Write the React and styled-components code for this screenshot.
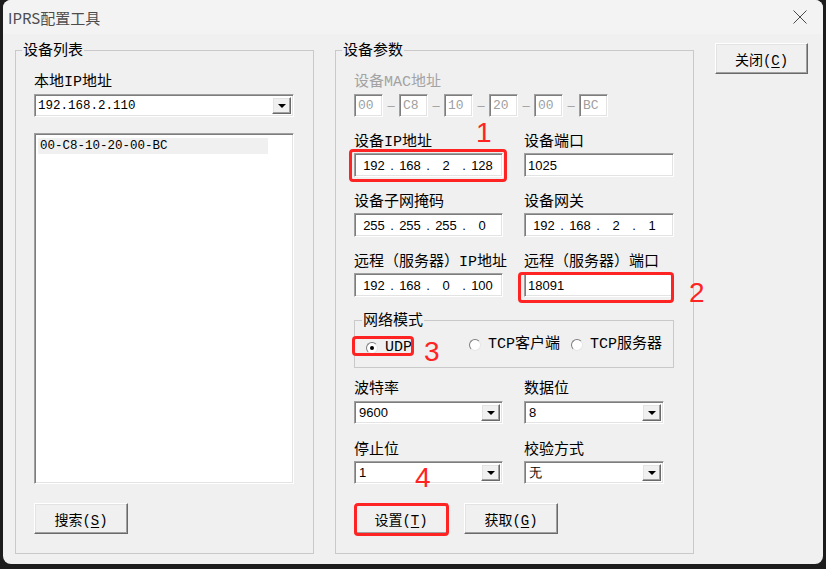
import React from 'react';
import styled, { createGlobalStyle, css } from 'styled-components';

const UI_FONT = `"Liberation Mono", "Noto Sans CJK SC", monospace`;
const CJK_FONT = `"Noto Sans CJK SC", "Noto Sans", sans-serif`;
const FIELD_FONT = `"Liberation Sans", Arial, sans-serif`;
const MARK_RED = '#ff2424';

const GlobalStyle = createGlobalStyle`
  html, body {
    margin: 0;
    padding: 0;
    background: #1c1c1c;
    overflow: hidden;
  }
  body {
    width: 826px;
    height: 569px;
  }
`;

const sunken = css`
  box-sizing: border-box;
  border: 1px solid;
  border-color: #a0a0a0 #ffffff #ffffff #a0a0a0;
  box-shadow: inset 1px 1px 0 #7d7d7d, inset -1px -1px 0 #e3e3e3;
  background: #fff;
`;

const raised = css`
  box-sizing: border-box;
  background: #f0f0f0;
  border: 1px solid;
  border-color: #ffffff #696969 #696969 #ffffff;
  box-shadow: inset -1px -1px 0 #a0a0a0, inset 1px 1px 0 #e3e3e3;
`;

const Window = styled.div`
  position: relative;
  margin-left: 3px;
  width: 820px;
  height: 564px;
  background: #f0f0f0;
  border-radius: 8px;
  overflow: hidden;
  font-family: ${UI_FONT};
  color: #000;
`;

const TitleBar = styled.div`
  height: 34px;
  display: flex;
  align-items: center;
  justify-content: space-between;
  padding: 0 16px 0 5px;
  background: #f3f3f3;
`;

const Title = styled.div`
  font-family: ${CJK_FONT};
  font-size: 15px;
  color: #4d4d4d;
`;

const Body = styled.div`
  display: flex;
  align-items: flex-start;
  gap: 21px;
  padding: 8px 0 0 12px;
`;

const GroupBox = styled.fieldset`
  box-sizing: border-box;
  margin: ${(p) => p.$mt || 0}px 0 0;
  padding: 0;
  min-inline-size: 0;
  width: ${(p) => (p.$w ? `${p.$w}px` : '100%')};
  height: ${(p) => p.$h}px;
  border: 1px solid #c9c9c9;
`;

// text sits 2px low in its 16px box, like the dialog font
const Legend = styled.legend`
  padding: 0 1px;
  margin-left: ${(p) => p.$indent || 6}px;
  font-size: 15px;
  height: 16px;
  line-height: 19px;
`;

const GroupBody = styled.div`
  padding: 0 ${(p) => p.$r ?? 19}px 0 ${(p) => p.$l ?? 18}px;
`;

const Label = styled.div`
  font-size: 15px;
  line-height: 20px;
  height: 16px;
  white-space: nowrap;
  margin-top: ${(p) => p.$mt || 0}px;
  color: ${(p) => (p.$disabled ? '#a3a3a3' : '#000')};
`;

const TextBox = styled.div`
  ${sunken}
  width: ${(p) => (p.$w ? `${p.$w}px` : '100%')};
  height: ${(p) => p.$h || 24}px;
  margin-top: ${(p) => p.$mt || 0}px;
  padding: 0 3px;
  display: flex;
  align-items: center;
  font-family: ${FIELD_FONT};
  font-size: 13px;
`;

const IpPart = styled.span`
  width: 28px;
  text-align: center;
`;

const IpDot = styled.span`
  width: 8px;
  text-align: center;
`;

const MacRow = styled.div`
  display: flex;
  align-items: center;
  margin-top: 5px;
`;

const MacBox = styled.div`
  ${sunken}
  width: 29px;
  height: 23px;
  padding: 0 3px;
  display: flex;
  align-items: center;
  font-size: 13px;
  color: #a0a0a0;
`;

const MacDash = styled.span`
  width: 16px;
  text-align: center;
  font-family: ${FIELD_FONT};
  font-size: 13px;
  color: #a0a0a0;
`;

const Combo = styled.div`
  ${sunken}
  width: ${(p) => (p.$w ? `${p.$w}px` : '100%')};
  height: 23px;
  margin-top: ${(p) => p.$mt || 0}px;
  display: flex;
  align-items: stretch;
  padding: 2px 2px 2px 3px;
`;

const ComboValue = styled.div`
  flex: 1;
  display: flex;
  align-items: center;
  font-family: ${(p) => (p.$mono ? UI_FONT : FIELD_FONT)};
  font-size: ${(p) => (p.$mono ? '12.5px' : '13px')};
  padding-left: ${(p) => (p.$mono ? 0 : 1)}px;
`;

const DropButton = styled.div`
  ${raised}
  width: 19px;
  display: flex;
  align-items: center;
  justify-content: center;
`;

const ListBox = styled.div`
  ${sunken}
  height: 351px;
  margin-top: 16px;
  padding: 4px 0 0 3px;
`;

const ListItem = styled.div`
  width: 230px;
  height: 16px;
  line-height: 16px;
  padding-left: 2px;
  box-sizing: border-box;
  font-size: 12.5px;
  background: ${(p) => (p.$selected ? '#f0f0f0' : 'transparent')};
`;

const Button = styled.button`
  ${raised}
  width: ${(p) => p.$w || 94}px;
  height: 31px;
  margin-top: ${(p) => p.$mt || 0}px;
  padding: 0;
  font-family: ${UI_FONT};
  font-size: 14px;
  color: #000;
  u {
    text-underline-offset: 2px;
  }
`;

const Pair = styled.div`
  display: grid;
  grid-template-columns: 149px 150px;
  column-gap: 21px;
  margin-top: ${(p) => p.$mt || 0}px;
`;

const Cell = styled.div`
  display: flex;
  flex-direction: column;
  gap: ${(p) => p.$gap ?? 4}px;
`;

const RadioRow = styled.div`
  display: grid;
  grid-template-columns: 103px 102px auto;
  margin-top: 9px;
`;

const RadioItem = styled.div`
  display: flex;
  align-items: center;
  gap: ${(p) => p.$gap || 7}px;
  height: 16px;
  font-size: 15px;
  line-height: 16px;
  white-space: nowrap;
`;

const RadioCircle = styled.span`
  box-sizing: border-box;
  width: 12px;
  height: 12px;
  border-radius: 50%;
  background: #fff;
  border: 1px solid;
  border-color: #7d7d7d #e6e6e6 #e6e6e6 #7d7d7d;
  display: flex;
  align-items: center;
  justify-content: center;
  &::after {
    content: '';
    width: 4px;
    height: 4px;
    border-radius: 50%;
    background: ${(p) => (p.$checked ? '#000' : 'transparent')};
  }
`;

const ButtonRow = styled.div`
  display: flex;
  gap: 16px;
  margin-top: 19px;
`;

const Marked = styled.div`
  position: relative;
  display: ${(p) => (p.$inline ? 'inline-block' : 'block')};
  &::after {
    content: '';
    position: absolute;
    inset: ${(p) => p.$inset};
    border: 3px solid ${MARK_RED};
    border-radius: 4px;
    pointer-events: none;
  }
`;

const MarkNumber = styled.div`
  position: absolute;
  left: ${(p) => p.$x}px;
  top: ${(p) => p.$y}px;
  font-family: ${FIELD_FONT};
  font-size: 28px;
  line-height: 28px;
  color: ${MARK_RED};
`;

const CloseButton = styled(Button)`
  width: 93px;
  margin-top: 1px;
`;

function CloseIcon() {
  return (
    <svg width="14" height="14" viewBox="0 0 14 14">
      <path d="M0.5 0.5 L13.5 13.5 M13.5 0.5 L0.5 13.5" stroke="#4a4a4a" strokeWidth="1" fill="none" />
    </svg>
  );
}

function Arrow() {
  return (
    <svg width="8" height="4" viewBox="0 0 8 4">
      <polygon points="0,0 8,0 4,4" fill="#000" />
    </svg>
  );
}

function ComboBox({ value, width, mono, mt }) {
  return (
    <Combo $w={width} $mt={mt}>
      <ComboValue $mono={mono}>{value}</ComboValue>
      <DropButton>
        <Arrow />
      </DropButton>
    </Combo>
  );
}

function IpField({ parts }) {
  return (
    <TextBox style={{ paddingLeft: 5 }}>
      {parts.map((part, i) => (
        <React.Fragment key={i}>
          {i > 0 && <IpDot>.</IpDot>}
          <IpPart>{part}</IpPart>
        </React.Fragment>
      ))}
    </TextBox>
  );
}

const MAC = ['00', 'C8', '10', '20', '00', 'BC'];

function Radio({ label, checked }) {
  return (
    <RadioItem>
      <RadioCircle $checked={checked} />
      {label}
    </RadioItem>
  );
}

export default function App() {
  return (
    <>
      <GlobalStyle />
      <Window>
        <TitleBar>
          <Title>IPRS配置工具</Title>
          <CloseIcon />
        </TitleBar>
        <Body>
          <GroupBox $w={299} $h={512}>
            <Legend>设备列表</Legend>
            <GroupBody>
              <Label $mt={15}>本地IP地址</Label>
              <ComboBox value="192.168.2.110" mono mt={5} />
              <ListBox>
                <ListItem $selected>00-C8-10-20-00-BC</ListItem>
              </ListBox>
              <Button $mt={19}>
                搜索(<u>S</u>)
              </Button>
            </GroupBody>
          </GroupBox>

          <GroupBox $w={359} $h={512}>
            <Legend>设备参数</Legend>
            <GroupBody>
              <Label $mt={15} $disabled>
                设备MAC地址
              </Label>
              <MacRow>
                {MAC.map((m, i) => (
                  <React.Fragment key={i}>
                    {i > 0 && <MacDash>–</MacDash>}
                    <MacBox>{m}</MacBox>
                  </React.Fragment>
                ))}
              </MacRow>

              <Pair $mt={16}>
                <Cell>
                  <Label>设备IP地址</Label>
                  <Marked $inset="-4px -4px -5px -5px">
                    <IpField parts={['192', '168', '2', '128']} />
                  </Marked>
                </Cell>
                <Cell>
                  <Label>设备端口</Label>
                  <TextBox>1025</TextBox>
                </Cell>
              </Pair>

              <Pair $mt={16}>
                <Cell>
                  <Label>设备子网掩码</Label>
                  <IpField parts={['255', '255', '255', '0']} />
                </Cell>
                <Cell>
                  <Label>设备网关</Label>
                  <IpField parts={['192', '168', '2', '1']} />
                </Cell>
              </Pair>

              <Pair $mt={16}>
                <Cell>
                  <Label>远程（服务器）IP地址</Label>
                  <IpField parts={['192', '168', '0', '100']} />
                </Cell>
                <Cell>
                  <Label>远程（服务器）端口</Label>
                  <Marked $inset="-1px 0 -6px -6px">
                    <TextBox>18091</TextBox>
                  </Marked>
                </Cell>
              </Pair>

              <GroupBox $mt={15} $h={56}>
                <Legend $indent={7}>网络模式</Legend>
                <GroupBody $l={11} $r={0}>
                  <RadioRow>
                    <div>
                      <Marked $inline $inset="-4px -2px 0 -14px">
                        <Radio label="UDP" checked />
                      </Marked>
                    </div>
                    <Radio label="TCP客户端" />
                    <Radio label="TCP服务器" />
                  </RadioRow>
                </GroupBody>
              </GroupBox>

              <Pair $mt={12}>
                <Cell $gap={5}>
                  <Label>波特率</Label>
                  <ComboBox value="9600" />
                </Cell>
                <Cell $gap={5}>
                  <Label>数据位</Label>
                  <ComboBox value="8" width={140} />
                </Cell>
              </Pair>

              <Pair $mt={17}>
                <Cell>
                  <Label>停止位</Label>
                  <ComboBox value="1" />
                </Cell>
                <Cell>
                  <Label>校验方式</Label>
                  <ComboBox value="无" width={140} />
                </Cell>
              </Pair>

              <ButtonRow>
                <Marked $inline $inset="0 -1px -2px 0">
                  <Button>
                    设置(<u>T</u>)
                  </Button>
                </Marked>
                <Button>
                  获取(<u>G</u>)
                </Button>
              </ButtonRow>
            </GroupBody>
          </GroupBox>

          <CloseButton>
            关闭(<u>C</u>)
          </CloseButton>
        </Body>

        <MarkNumber $x={473} $y={119}>1</MarkNumber>
        <MarkNumber $x={686} $y={279}>2</MarkNumber>
        <MarkNumber $x={421} $y={338}>3</MarkNumber>
        <MarkNumber $x={412} $y={464}>4</MarkNumber>
      </Window>
    </>
  );
}
